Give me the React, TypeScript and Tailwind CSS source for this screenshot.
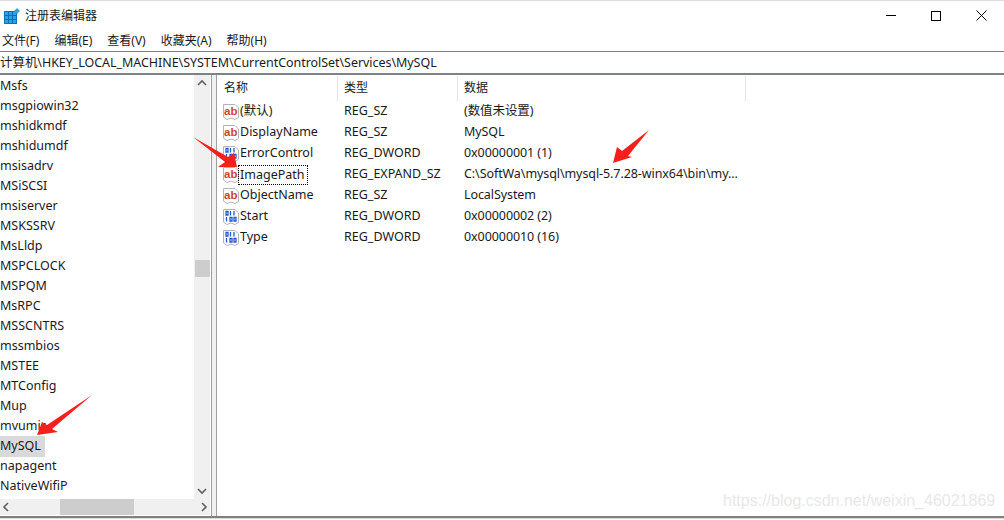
import React from 'react';

const FONT = "font-['Noto_Sans','Noto_Sans_CJK_SC',sans-serif]";

const MENUS = ['文件(F)', '编辑(E)', '查看(V)', '收藏夹(A)', '帮助(H)'];

const KEYS = [
  'Msfs', 'msgpiowin32', 'mshidkmdf', 'mshidumdf', 'msisadrv', 'MSiSCSI', 'msiserver', 'MSKSSRV', 'MsLldp',
  'MSPCLOCK', 'MSPQM', 'MsRPC', 'MSSCNTRS', 'mssmbios', 'MSTEE', 'MTConfig', 'Mup', 'mvumis', 'MySQL',
  'napagent', 'NativeWifiP',
];

const VALUES = [
  { name: '(默认)', type: 'REG_SZ', data: '(数值未设置)', kind: 'ab' },
  { name: 'DisplayName', type: 'REG_SZ', data: 'MySQL', kind: 'ab' },
  { name: 'ErrorControl', type: 'REG_DWORD', data: '0x00000001 (1)', kind: 'bin' },
  { name: 'ImagePath', type: 'REG_EXPAND_SZ', data: 'C:\\SoftWa\\mysql\\mysql-5.7.28-winx64\\bin\\my...', kind: 'ab' },
  { name: 'ObjectName', type: 'REG_SZ', data: 'LocalSystem', kind: 'ab' },
  { name: 'Start', type: 'REG_DWORD', data: '0x00000002 (2)', kind: 'bin' },
  { name: 'Type', type: 'REG_DWORD', data: '0x00000010 (16)', kind: 'bin' },
];

const AppIcon = () => (
  <svg width="16" height="16" viewBox="0 0 16 16">
    <path d="M0 3h13v13H0z" fill="#2aa3e6" />
    <path d="M0.500 3.500h12v12h-12zM4.500 3.500v12M8.500 3.500v12M0.500 7.500h12M0.500 11.500h12" fill="none" stroke="#0f6fb5" />
    <path d="M13 0l3 3-3 3-3-3z" fill="#3f9fdc" />
  </svg>
);

const ValueIcon = ({ kind }: { kind: string }) => (
  <svg width="16" height="16" viewBox="0 0 16 16" className="shrink-0">
    <path d="M0.500 0.500H12L15.500 4V13.500L12 15.500L8 14L4 15.500L0.500 13Z" fill="#fff" stroke="#b4b4b4" />
    {kind === 'ab' ? (
      <text x="1" y="10.500" fontSize="11.500" fontWeight="700" fill="#d2452a" fontFamily="Liberation Sans, sans-serif">ab</text>
    ) : (
      <path d="M3 2.500h2v3.500H3zM7.500 2v4.500M11 2v4.500M3.500 8v4.500M7 8.500h2V12H7zM11 8.500h2V12h-2z" fill="none" stroke="#2458d0" strokeWidth="1.300" />
    )}
  </svg>
);

const Chevron = ({ d }: { d: string }) => (
  <svg width="10" height="10" viewBox="0 0 10 10">
    <path d={d} fill="none" stroke="#606060" strokeWidth="1.600" />
  </svg>
);

const App: React.FC = () => {
  return (
    <div className={`relative w-[1004px] h-[520px] overflow-hidden bg-white text-[#1a1a1a] text-[12.500px] ${FONT}`}>
      <div className="h-px bg-[#dcdcdc]" />

      <div className="h-[29px] flex items-center pl-1">
        <AppIcon />
        <span className="ml-[5px] text-[12px] leading-none">注册表编辑器</span>
        <div className="ml-auto flex items-center gap-[35px] pr-[17px]">
          <div className="w-[10px] h-px bg-black" />
          <div className="w-[10px] h-[10px] border border-black" />
          <svg width="11" height="11" viewBox="0 0 11 11">
            <path d="M0.500 0.500L10.500 10.500M10.500 0.500L0.500 10.500" stroke="#000" fill="none" />
          </svg>
        </div>
      </div>

      <div className="h-[21px] flex items-center pl-[2px] pt-px gap-[15px] text-[12px]">
        {MENUS.map((m) => (
          <span key={m}>{m}</span>
        ))}
      </div>

      <div className="h-[22px] flex items-center pt-px border-t border-[#808080] text-[12.500px] tracking-[-0.05px]">
        计算机\HKEY_LOCAL_MACHINE\SYSTEM\CurrentControlSet\Services\MySQL
      </div>

      <div className="h-[443px] flex border-t-2 border-[#808088]">
        <div className="w-[211px] shrink-0 flex flex-col">
          <div className="h-[424px] flex">
            <div className="w-[194px] pt-px">
              {KEYS.map((k) => (
                <div key={k} className="h-5 flex items-center leading-none">
                  <span className={k === 'MySQL' ? 'h-[21px] w-[45px] bg-[#d9d9d9] flex items-center' : ''}>{k}</span>
                </div>
              ))}
            </div>
            <div className="w-[16px] bg-[#f0f0f0] flex flex-col justify-between items-center py-[3px]">
              <Chevron d="M1 7L5 3L9 7" />
              <div className="w-[15px] h-[17px] bg-[#cdcdcd] mt-[-38px]" />
              <Chevron d="M1 3L5 7L9 3" />
            </div>
          </div>
          <div className="h-[16px] bg-[#f0f0f0] flex items-center justify-between px-[1px] mr-px">
            <Chevron d="M7 1L3 5L7 9" />
            <div className="w-[74px] h-[16px] bg-[#cdcdcd] mr-[17px]" />
            <Chevron d="M3 1L7 5L3 9" />
          </div>
        </div>

        <div className="w-[6px] shrink-0 bg-[#f0f0f0] border-x border-[#a0a0a0]" />

        <div className="flex-1 min-w-0">
          <div className="h-[26px] flex items-center text-[12px]">
            <div className="w-[121px] h-[25px] pl-[7px] flex items-center border-r border-[#e5e5e5]">名称</div>
            <div className="w-[120px] h-[25px] pl-[6px] flex items-center border-r border-[#e5e5e5]">类型</div>
            <div className="w-[288px] h-[25px] pl-[6px] flex items-center border-r border-[#e5e5e5]">数据</div>
          </div>
          {VALUES.map((v) => (
            <div key={v.name} className="h-[21px] flex items-center">
              <div className="w-[121px] pl-[6px] flex items-center gap-px">
                <ValueIcon kind={v.kind} />
                <span className={v.name === 'ImagePath' ? 'border border-dotted border-black leading-[18px] ml-[-2px] pl-px pr-[2px]' : ''}>{v.name}</span>
              </div>
              <div className="w-[120px] pl-[6px]">{v.type}</div>
              <div className="pl-[6px] whitespace-nowrap tracking-[-0.08px]">{v.data}</div>
            </div>
          ))}
        </div>
      </div>

      <div className="h-[3px] border-t-2 border-[#808080] bg-[#dcdcdc]" />

      {/* annotation arrows drawn over the screenshot */}
      <svg width="1004" height="520" viewBox="0 0 1004 520" className="absolute inset-0 pointer-events-none">
        <polygon points="193,137 228,157 234,153 237,167 218,167 225,162" fill="#f5201c" />
        <polygon points="649,130 628,156 632,157 613,163 617,147 622,151" fill="#f5201c" />
        <polygon points="92,395 52,429 58,432 37,435 42,422 47,425" fill="#f5201c" />
      </svg>

      <span className="absolute left-[723px] top-[491px] text-[16px] leading-5 text-[#e8e8e8] font-['Liberation_Sans',sans-serif]">
        https://blog.csdn.net/weixin_46021869
      </span>
    </div>
  );
};

export default App;
